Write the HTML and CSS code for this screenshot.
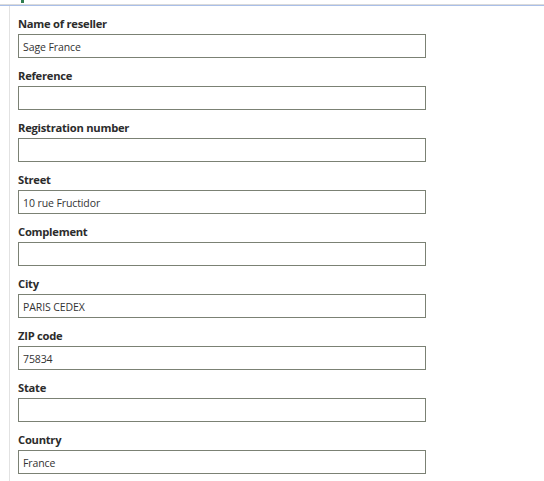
FILE: index.html
```html
<!DOCTYPE html>
<html>
<head>
<meta charset="utf-8">
<link rel="stylesheet" href="styles.css">
</head>
<body>
<div class="topbar"><span class="mark"></span></div>
<div class="panel">
  <div class="field"><label class="lbl">Name of reseller</label><div class="inp">Sage France</div></div>
  <div class="field"><label class="lbl">Reference</label><div class="inp"></div></div>
  <div class="field"><label class="lbl">Registration number</label><div class="inp"></div></div>
  <div class="field"><label class="lbl">Street</label><div class="inp">10 rue Fructidor</div></div>
  <div class="field"><label class="lbl">Complement</label><div class="inp"></div></div>
  <div class="field"><label class="lbl">City</label><div class="inp">PARIS CEDEX</div></div>
  <div class="field"><label class="lbl">ZIP code</label><div class="inp">75834</div></div>
  <div class="field"><label class="lbl">State</label><div class="inp"></div></div>
  <div class="field"><label class="lbl">Country</label><div class="inp">France</div></div>
</div>
</body>
</html>
```
FILE: styles.css
```css
html, body {
  margin: 0;
  padding: 0;
  background: #ffffff;
  font-family: "Open Sans", "Noto Sans", sans-serif;
  overflow: hidden;
}
.topbar {
  height: 4px;
  border-bottom: 1px solid #dadada;
  box-shadow: 0 1px 0 #a9bfe8;
  position: relative;
}
.mark {
  position: absolute;
  left: 21px;
  top: 0;
  width: 3px;
  height: 3px;
  background: #2f7d4f;
}
.panel {
  margin-left: 9px;
  margin-top: 1px;
  border-left: 1px solid #e2e2e2;
  padding-left: 8px;
  height: 480px;
}
.field {
  display: flex;
  flex-direction: column;
  padding-top: 10px;
  width: 408px;
}
.lbl {
  font-size: 11.2px;
  font-weight: 700;
  line-height: 16px;
  color: #2c2c2c;
  margin-bottom: 2px;
  letter-spacing: -0.25px;
}
.inp {
  box-sizing: border-box;
  height: 24px;
  border: 1px solid #7b8174;
  padding: 1px 4px 0;
  font-size: 10.5px;
  line-height: 22px;
  color: #333333;
  letter-spacing: -0.1px;
}
```
